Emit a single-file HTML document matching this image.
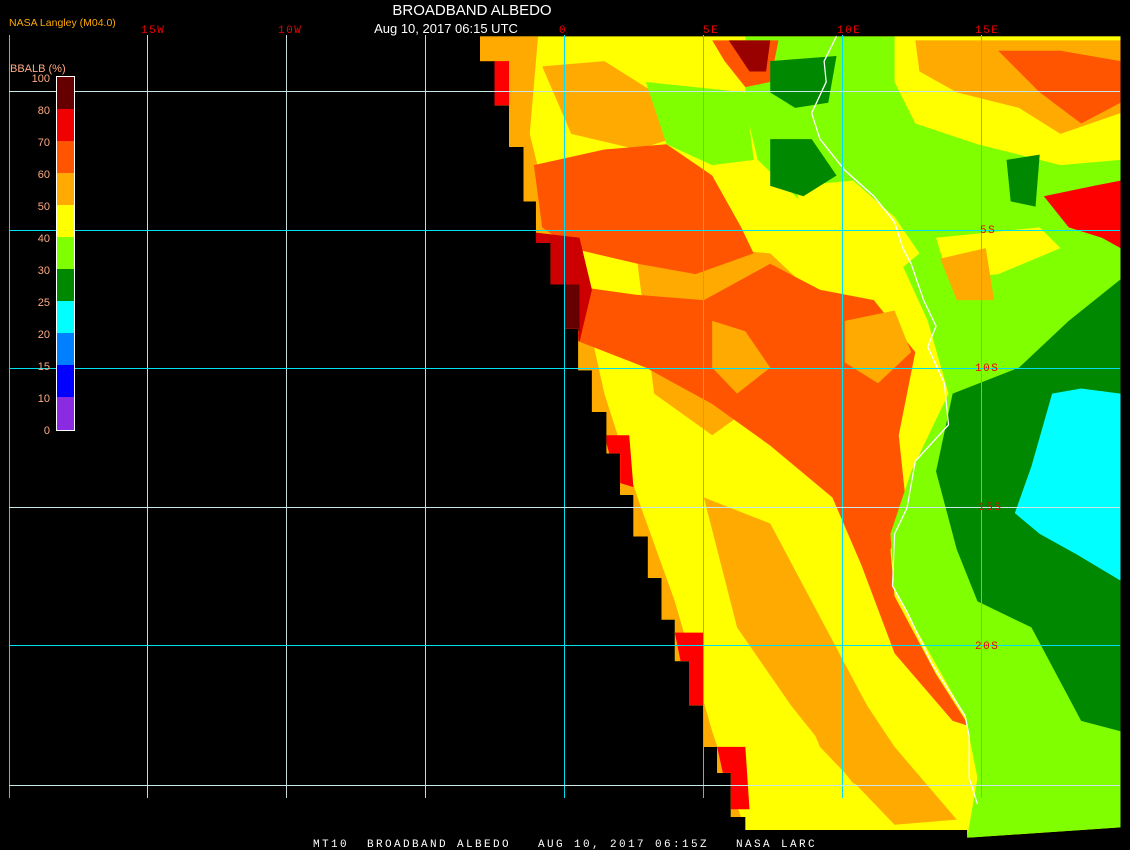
<!DOCTYPE html>
<html><head><meta charset="utf-8"><style>
html,body{margin:0;padding:0;background:#000;}
body{width:1130px;height:850px;overflow:hidden;position:relative;font-family:"Liberation Sans",sans-serif;}
svg{position:absolute;left:0;top:0;}
</style></head><body>
<svg width="1130" height="850" viewBox="0 0 1130 850">
<g transform="matrix(0.41459,0,0,0.51948,480,30)">
<clipPath id="cp"><polygon points="0,12 0,60 35,60 35,145 70,145 70,225 105,225 105,330 135,330 135,410 170,410 170,490 205,490 205,575 237,575 237,655 270,655 270,735 305,735 305,815 338,815 338,895 370,895 370,975 405,975 405,1055 438,1055 438,1135 470,1135 470,1215 505,1215 505,1300 540,1300 540,1380 572,1380 572,1430 605,1430 605,1515 640,1515 640,1540 1175,1540 1175,1555 1545,1535 1545,12"/></clipPath>
<g clip-path="url(#cp)">
<rect x="0" y="0" width="1600" height="1600" fill="#ffff00"/>
<polygon fill="#ffaa00" points="0,12 140,12 120,200 160,330 250,520 300,700 380,900 470,1100 560,1350 640,1540 0,1540"/>
<polygon fill="#ffaa00" points="540,900 700,950 800,1100 900,1250 1000,1400 1100,1500 900,1450 750,1300 620,1150"/>
<polygon fill="#ffaa00" points="700,1150 850,1200 1000,1380 1150,1520 1000,1530 820,1380"/>
<polygon fill="#ffaa00" points="380,450 550,420 700,430 820,520 700,700 560,780 420,700"/>
<polygon fill="#ffaa00" points="150,70 300,60 420,120 500,200 380,230 220,200"/>
<polygon fill="#ff5500" points="130,260 300,230 450,220 560,280 630,380 660,430 520,470 380,450 220,420 150,380"/>
<polygon fill="#ff5500" points="200,490 380,510 540,520 700,450 820,500 950,520 1050,620 1010,780 1030,930 990,1000 1000,1090 1100,1240 1180,1340 1140,1330 1000,1200 920,1030 850,900 700,800 560,720 400,650 240,600"/>
<polygon fill="#ffaa00" points="560,560 640,580 700,650 620,700 560,650"/>
<polygon fill="#ffaa00" points="880,560 1000,540 1040,620 960,680 880,640"/>
<polygon fill="#80ff00" points="640,12 1545,12 1545,1535 1175,1555 1200,1440 1170,1320 1000,1080 990,970 1040,850 1130,700 1080,560 1000,420 900,400 800,350 670,250 640,150"/>
<polygon fill="#80ff00" points="400,100 640,120 660,250 560,260 450,220"/>
<polygon fill="#ffff00" points="760,300 900,290 1000,360 1060,430 1000,470 880,420 780,360"/>
<polygon fill="#ffff00" points="1100,400 1350,380 1400,420 1250,470 1130,480"/>
<polygon fill="#ffaa00" points="1110,440 1220,420 1240,520 1150,520"/>
<polygon fill="#ffff00" points="1000,12 1545,12 1545,250 1400,260 1200,220 1050,180 1000,100"/>
<polygon fill="#ffaa00" points="1050,20 1545,20 1545,160 1400,200 1300,150 1150,120 1060,80"/>
<polygon fill="#ff5500" points="1250,40 1400,40 1545,60 1545,140 1450,180 1350,120"/>
<polygon fill="#ff0000" points="1360,320 1480,300 1545,290 1545,420 1500,400 1420,380"/>
<polygon fill="#ff5500" points="560,20 720,20 700,100 640,110 590,60"/>
<polygon fill="#990000" points="600,20 700,20 690,80 650,80"/>
<polygon fill="#008800" points="700,60 860,50 840,140 760,150 700,120"/>
<polygon fill="#008800" points="700,210 800,210 860,280 780,320 700,300"/>
<polygon fill="#008800" points="1270,250 1350,240 1340,340 1280,330"/>
<polygon fill="#008800" points="1140,700 1300,650 1420,560 1545,480 1545,1350 1450,1330 1330,1150 1200,1100 1150,1000 1100,850"/>
<polygon fill="#00ffff" points="1380,700 1450,690 1545,700 1545,1060 1440,1010 1350,970 1290,930 1330,840"/>
<polygon fill="#ff0000" points="0,60 70,60 70,145 35,145"/>
<polygon fill="#cc0000" points="135,390 240,400 270,500 240,600 205,575 170,490 135,410"/>
<polygon fill="#660000" points="205,490 240,490 240,580 205,575"/>
<polygon fill="#ff0000" points="300,780 360,780 370,880 330,870"/>
<polygon fill="#ff0000" points="470,1160 540,1160 540,1300 505,1300"/>
<polygon fill="#ff0000" points="572,1380 640,1380 650,1500 605,1500"/>
</g>
<polyline fill="none" stroke="#fff" stroke-width="3" points="860,12 830,60 835,100 800,160 820,210 880,270 950,320 1000,370 1020,420 1040,450 1070,520 1100,570 1080,610 1120,680 1130,760 1050,830 1030,920 1000,970 995,1070 1030,1120 1090,1220 1170,1320 1180,1360 1180,1440 1200,1490"/>
</g>
<g stroke="#00e0f0" stroke-width="1">
<line x1="9.5" y1="35" x2="9.5" y2="798"/>
<line x1="147.5" y1="35" x2="147.5" y2="798" stroke="#c8d8d8"/>
<line x1="286.5" y1="35" x2="286.5" y2="798" stroke="#c8d8d8"/>
<line x1="425.5" y1="35" x2="425.5" y2="798" stroke="#c8d8d8"/>
<line x1="564.5" y1="35" x2="564.5" y2="798"/>
<line x1="703.5" y1="35" x2="703.5" y2="798"/>
<line x1="842.5" y1="35" x2="842.5" y2="798"/>
<line x1="981.5" y1="35" x2="981.5" y2="798"/>
<line x1="9" y1="91.5" x2="1120" y2="91.5" stroke="#c8e8e8"/>
<line x1="9" y1="230.5" x2="1120" y2="230.5"/>
<line x1="9" y1="368.5" x2="1120" y2="368.5"/>
<line x1="9" y1="507.5" x2="1120" y2="507.5" stroke="#c8e8e8"/>
<line x1="9" y1="645.5" x2="1120" y2="645.5"/>
<line x1="9" y1="785.5" x2="1120" y2="785.5" stroke="#c8e8e8"/>
</g>
<rect x="57" y="77" width="17" height="32" fill="#660000"/>
<rect x="57" y="109" width="17" height="32" fill="#f00000"/>
<rect x="57" y="141" width="17" height="32" fill="#ff5500"/>
<rect x="57" y="173" width="17" height="32" fill="#ffaa00"/>
<rect x="57" y="205" width="17" height="32" fill="#ffff00"/>
<rect x="57" y="237" width="17" height="32" fill="#80ff00"/>
<rect x="57" y="269" width="17" height="32" fill="#008800"/>
<rect x="57" y="301" width="17" height="32" fill="#00ffff"/>
<rect x="57" y="333" width="17" height="32" fill="#0080ff"/>
<rect x="57" y="365" width="17" height="32" fill="#0000ff"/>
<rect x="57" y="397" width="17" height="33" fill="#8a2be2"/>
<rect x="56.5" y="76.5" width="18" height="354" fill="none" stroke="#fff" stroke-width="1"/>
<g fill="#ffaa80" font-family="Liberation Sans,sans-serif" font-size="11" text-anchor="end">
<text x="50" y="82">100</text><text x="50" y="114">80</text><text x="50" y="146">70</text><text x="50" y="178">60</text><text x="50" y="210">50</text><text x="50" y="242">40</text><text x="50" y="274">30</text><text x="50" y="306">25</text><text x="50" y="338">20</text><text x="50" y="370">15</text><text x="50" y="402">10</text><text x="50" y="434">0</text>
</g>
<text x="10" y="72" fill="#ffaa80" font-size="11" font-family="Liberation Sans,sans-serif">BBALB (%)</text>
<text x="9" y="26" fill="#ffaa00" font-size="10.5" font-family="Liberation Sans,sans-serif">NASA Langley (M04.0)</text>
<text x="472" y="15" fill="#fff" font-size="15" text-anchor="middle" font-family="Liberation Sans,sans-serif">BROADBAND ALBEDO</text>
<text x="446" y="33" fill="#fff" font-size="13" text-anchor="middle" font-family="Liberation Sans,sans-serif">Aug 10, 2017 06:15 UTC</text>
<g fill="#ee0000" font-size="11" font-family="Liberation Mono,monospace" letter-spacing="1.5">
<text x="141" y="33">15W</text><text x="278" y="33">10W</text><text x="559" y="33">0</text><text x="703" y="33">5E</text><text x="837" y="33">10E</text><text x="975" y="33">15E</text>
<text x="980" y="233">5S</text><text x="975" y="371">10S</text><text x="978" y="510">15S</text><text x="975" y="649">20S</text>
</g>
<text x="313" y="847" fill="#fff" font-size="11" letter-spacing="2.4" font-family="Liberation Mono,monospace" xml:space="preserve">MT10  BROADBAND ALBEDO   AUG 10, 2017 06:15Z   NASA LARC</text>
</svg>
</body></html>
